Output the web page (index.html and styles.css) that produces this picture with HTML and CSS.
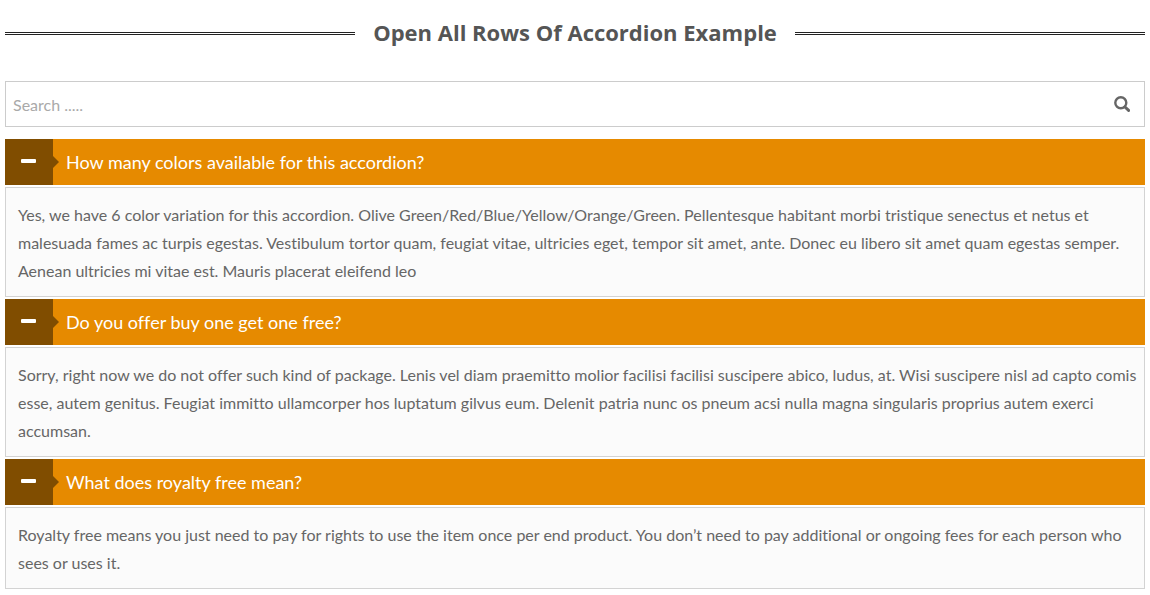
FILE: index.html
```html
<!DOCTYPE html>
<html lang="en">
<head>
<meta charset="utf-8">
<title>Open All Rows Of Accordion Example</title>
<link rel="stylesheet" href="styles.css">
</head>
<body>
<main class="page">
  <h1 class="title">Open All Rows Of Accordion Example</h1>
  <div class="search">
    <input class="search-input" type="text" placeholder="Search ....." aria-label="Search">
    <svg class="search-icon" viewBox="0 0 16 16" aria-hidden="true"><circle cx="6.8" cy="6.8" r="5.5"/><path class="search-handle" d="M11 11 14.6 14.4"/></svg>
  </div>
  <div class="accordion">
    <h2 class="heading"><button class="toggle" type="button" aria-expanded="true"><span class="marker"></span><span class="label">How many colors available for this accordion?</span></button></h2>
    <div class="panel">Yes, we have 6 color variation for this accordion. Olive Green/Red/Blue/Yellow/Orange/Green. Pellentesque habitant morbi tristique senectus et netus et malesuada fames ac turpis egestas. Vestibulum tortor quam, feugiat vitae, ultricies eget, tempor sit amet, ante. Donec eu libero sit amet quam egestas semper. Aenean ultricies mi vitae est. Mauris placerat eleifend leo</div>
    <h2 class="heading"><button class="toggle" type="button" aria-expanded="true"><span class="marker"></span><span class="label">Do you offer buy one get one free?</span></button></h2>
    <div class="panel">Sorry, right now we do not offer such kind of package. Lenis vel diam praemitto molior facilisi facilisi suscipere abico, ludus, at. Wisi suscipere nisl ad capto comis esse, autem genitus. Feugiat immitto ullamcorper hos luptatum gilvus eum. Delenit patria nunc os pneum acsi nulla magna singularis proprius autem exerci accumsan.</div>
    <h2 class="heading"><button class="toggle" type="button" aria-expanded="true"><span class="marker"></span><span class="label">What does royalty free mean?</span></button></h2>
    <div class="panel">Royalty free means you just need to pay for rights to use the item once per end product. You don’t need to pay additional or ongoing fees for each person who sees or uses it.</div>
  </div>
</main>
</body>
</html>
```
FILE: styles.css
```css
*,
*::before,
*::after {
  box-sizing: border-box;
}

body {
  margin: 0;
  background: #fff;
  color: #666;
  font-family: Lato, "Liberation Sans", sans-serif;
  font-size: 16px;
  line-height: 28px;
  font-variant-ligatures: none;
}

.page {
  padding: 16px 5px 6px;
}

.title {
  display: flex;
  align-items: center;
  gap: 18px;
  margin: 0 0 33px;
  color: #555;
  font: 700 22px/32px "Open Sans", sans-serif;
}

.title::before,
.title::after {
  content: "";
  flex: 1;
  height: 3px;
  margin-top: 2px;
  border: solid #222;
  border-width: 1px 0;
}

.search {
  display: flex;
  align-items: center;
  height: 46px;
  padding: 0 14px 0 7px;
  border: 1px solid #ccc;
}

.search-input {
  flex: 1;
  min-width: 0;
  padding: 2px 0 0;
  border: 0;
  outline: 0;
  background: none;
  color: #555;
  font: inherit;
}

.search-input::placeholder {
  color: #a9a9a9;
  opacity: 1;
}

.search-icon {
  width: 16px;
  height: 16px;
  fill: none;
  stroke: #666;
  stroke-width: 2.4;
}

.search-handle {
  stroke-width: 3;
  stroke-linecap: round;
}

.accordion {
  display: flex;
  flex-direction: column;
  gap: 2px;
  margin-top: 12px;
}

.heading {
  margin: 0;
  font: inherit;
  font-variant-ligatures: none;
}

.toggle {
  display: flex;
  width: 100%;
  min-height: 46px;
  padding: 0;
  border: 0;
  background: #e68a00;
  color: #fff;
  font: 18px/28px Lato, "Liberation Sans", sans-serif;
  font-variant-ligatures: none;
  text-align: left;
  cursor: pointer;
}

.marker {
  position: relative;
  display: flex;
  align-self: stretch;
  align-items: center;
  justify-content: center;
  flex: none;
  width: 48px;
  padding: 0 2px 2px 0;
  background: #804d00;
}

.marker::before {
  content: "";
  width: 15px;
  height: 4px;
  border-radius: 1px;
  background: #fff;
}

.marker::after {
  content: "";
  position: absolute;
  top: 50%;
  left: 100%;
  border: 6px solid transparent;
  border-left-color: #804d00;
  border-right: 0;
  transform: translateY(-50%);
}

.label {
  padding: 9px 13px;
}

.panel {
  padding: 13px 6px 11px 12px;
  border: 1px solid #d3d3d3;
  background: #fbfbfb;
}
```
